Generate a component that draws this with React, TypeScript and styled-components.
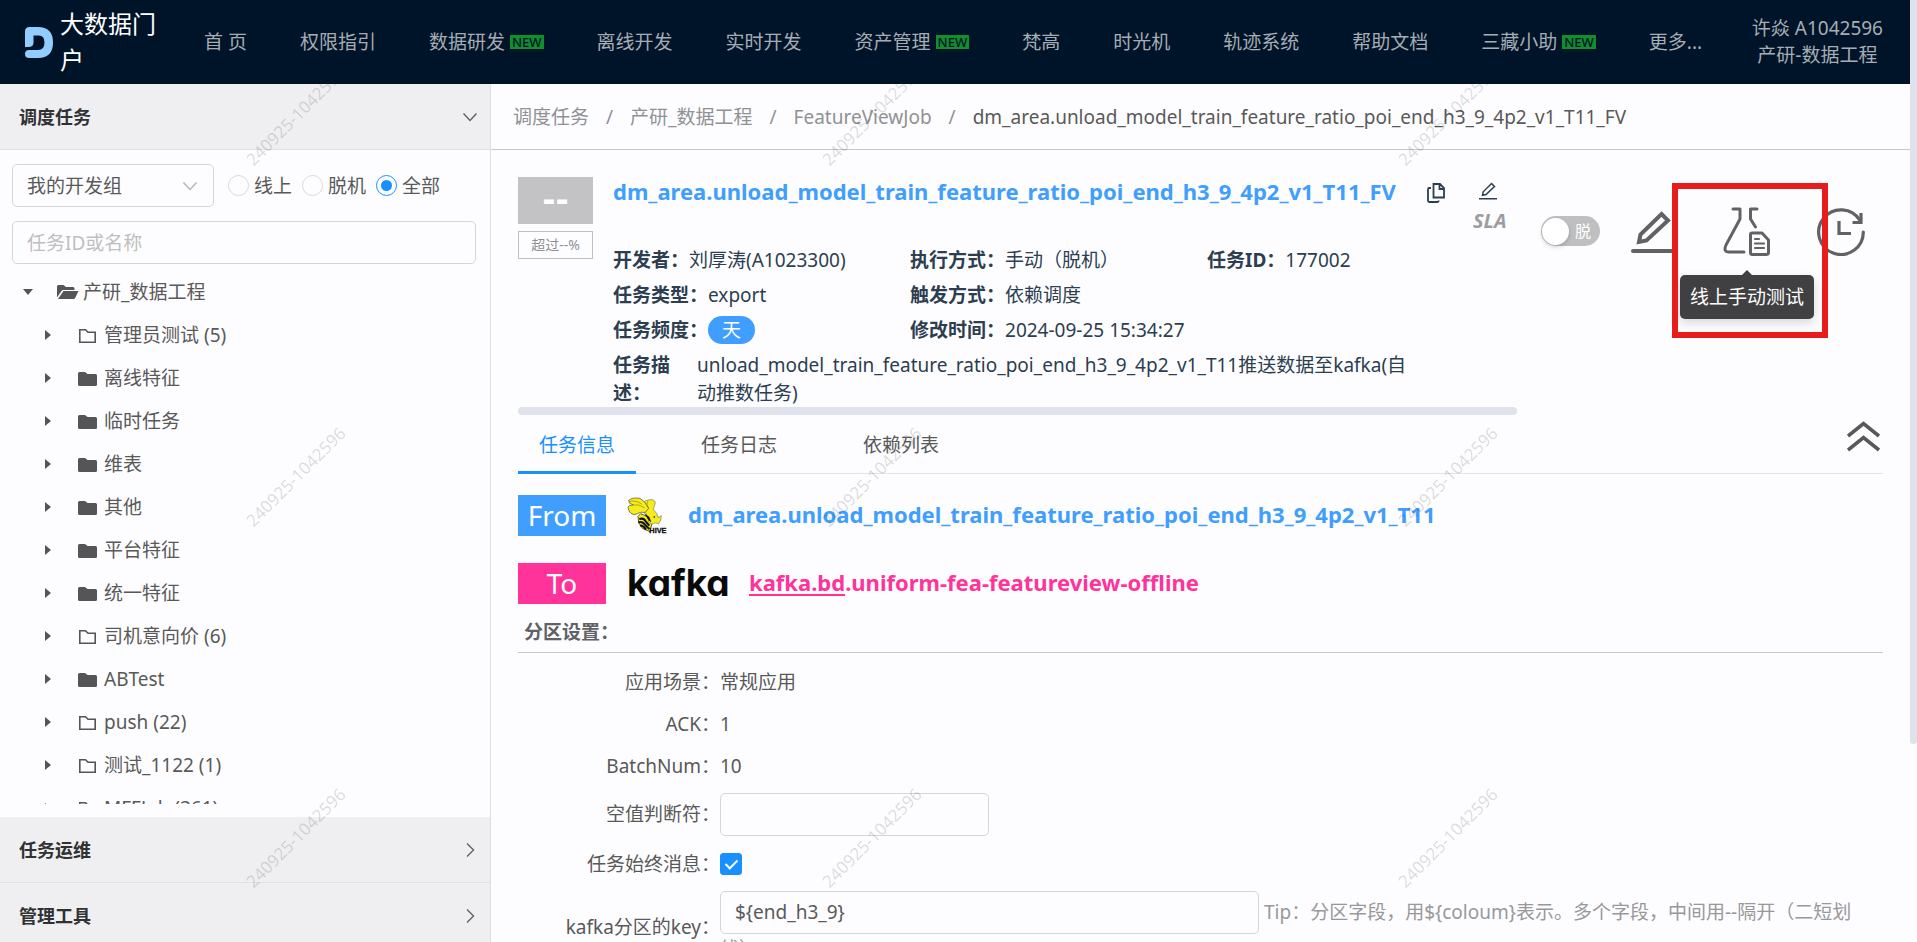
import React from 'react';
import styled, { createGlobalStyle, css } from 'styled-components';

const fontStack = '"Noto Sans", "Noto Sans CJK SC", sans-serif';

const GlobalStyle = createGlobalStyle`
  *, *::before, *::after { box-sizing: border-box; }
  body {
    margin: 0;
    background: #fdfdff;
    color: #595959;
    font-family: ${fontStack};
    font-size: 19px;
    line-height: 28px;
  }
  button, input, select { font: inherit; color: inherit; margin: 0; }
  button { border: 0; padding: 0; background: none; cursor: pointer; }
  a { color: inherit; text-decoration: none; }
  ul, dl, dd, h1, h2, p { margin: 0; padding: 0; list-style: none; }
  svg { display: block; flex: none; }
`;

/* ---------- shell ---------- */

const Page = styled.div`
  display: flex;
  height: 100vh;
  overflow: hidden;
`;

const Shell = styled.div`
  flex: 1;
  min-width: 0;
  display: flex;
  flex-direction: column;
`;

const ScrollRail = styled.div`
  width: 7px;
  flex: none;
`;

const ScrollThumb = styled.div`
  height: 79%;
  background: #dfe1ec;
  border-radius: 0 0 4px 4px;
`;

const Body = styled.div`
  position: relative;
  flex: 1;
  min-height: 0;
  display: flex;
  overflow: hidden;
`;

/* ---------- top bar ---------- */

const TopBar = styled.header`
  flex: none;
  height: 84px;
  display: flex;
  align-items: center;
  padding: 0 27px 0 25px;
  background: #001429;
  color: #a6adb4;
  line-height: 27px;
`;

const Brand = styled.a`
  display: flex;
  align-items: center;
  gap: 7px;
  width: 151px;
  margin-right: 28px;
  flex: none;
  color: #fff;
  font-size: 24px;
  line-height: 36px;
`;

const Menu = styled.nav`
  display: flex;
  align-items: center;
  gap: 53px;
  flex: 1;
  white-space: nowrap;
`;

const MenuLink = styled.a`
  display: flex;
  align-items: center;
  gap: 5px;
`;

const NewTag = styled.span`
  height: 14px;
  padding: 0 2px;
  background: #0f8f2d;
  color: #001429;
  font-size: 13px;
  line-height: 14px;
  font-weight: 500;
`;

const User = styled.div`
  text-align: center;
  white-space: nowrap;
`;

/* ---------- side bar ---------- */

const Sidebar = styled.aside`
  width: 491px;
  height: calc(100% + 7px);
  flex: none;
  display: flex;
  flex-direction: column;
  border-right: 1px solid #e0e0e4;
`;

const PanelHead = styled.button`
  flex: none;
  display: flex;
  align-items: center;
  justify-content: space-between;
  height: 66px;
  padding: 0 12px 0 19px;
  background: #efeff1;
  border-bottom: 1px solid #e0e0e3;
  color: #303133;
  font-size: 18px;
  font-weight: 700;
`;

const Filters = styled.form`
  flex: none;
  padding: 14px 14px 0 12px;
`;

const FilterRow = styled.div`
  display: flex;
  align-items: center;
  margin-bottom: 14px;
`;

const SelectBox = styled.div`
  display: grid;
  align-items: center;
  width: 202px;
  margin-right: 14px;

  & > * { grid-area: 1 / 1; }
  svg { justify-self: end; margin-right: 16px; pointer-events: none; }
`;

const fieldLook = css`
  height: 43px;
  border: 1px solid #d6d6d8;
  border-radius: 5px;
  background: transparent;
  padding: 0 14px;
  outline: none;
  &::placeholder { color: #bfbfbf; opacity: 1; }
`;

const Select = styled.select`
  ${fieldLook}
  appearance: none;
  width: 100%;
`;

const SearchInput = styled.input`
  ${fieldLook}
  display: block;
  width: 100%;
`;

const RadioLabel = styled.label`
  display: flex;
  align-items: center;
  gap: 5px;
  margin-right: 10px;
`;

const Radio = styled.input`
  appearance: none;
  display: grid;
  place-items: center;
  width: 21px;
  height: 21px;
  border: 1px solid #d9d9d9;
  border-radius: 50%;
  &:checked { border-color: #1890ff; }
  &:checked::after {
    content: '';
    width: 11px;
    height: 11px;
    border-radius: 50%;
    background: #1890ff;
  }
`;

const Tree = styled.ul`
  && { padding: 6px 0 0 23px; }
  flex: 1;
  min-height: 0;
  margin-bottom: 13px;
  overflow: hidden;
`;

const TreeRow = styled.li<{ $child?: boolean }>`
  display: flex;
  align-items: center;
  height: 43px;
  padding-left: ${(p) => (p.$child ? 21 : 0)}px;
`;

const CaretSlot = styled.span<{ $open?: boolean }>`
  display: flex;
  align-items: center;
  justify-content: center;
  width: 10px;
  margin-right: 24px;
`;

const FolderSlot = styled.span`
  width: 22px;
  margin-right: 4px;
`;

/* ---------- main ---------- */

const Main = styled.main`
  flex: 1;
  min-width: 0;
`;

const Crumbs = styled.nav`
  display: flex;
  align-items: center;
  gap: 17px;
  height: 66px;
  padding: 0 22px;
  border-bottom: 1px solid #c8c8ca;
  color: #909194;
  white-space: nowrap;
`;

const CurrentCrumb = styled.span`
  color: #595959;
`;

const Content = styled.div`
  padding: 27px 27px 0;
`;

const JobHead = styled.section`
  display: flex;
  color: #2c3e50;
`;

const JobScroll = styled.div`
  flex: 1;
  min-width: 0;
`;

const JobTop = styled.div`
  display: flex;
  height: 230px;
`;

const JobScrollbar = styled.div`
  height: 8px;
  border-radius: 4px;
  background: #dfe1ec;
`;

const ScoreColumn = styled.div`
  width: 75px;
  margin-right: 20px;
  flex: none;
`;

const Score = styled.div`
  height: 47px;
  margin-bottom: 7px;
  background: #c3c3c5;
  color: #fff;
  font-family: "DejaVu Sans", sans-serif;
  font-size: 32px;
  line-height: 47px;
  font-weight: 700;
  text-align: center;
`;

const ScoreNote = styled.div`
  height: 28px;
  border: 1px solid #c0c0c2;
  color: #909194;
  font-size: 14px;
  line-height: 26px;
  text-align: center;
`;

const JobInfo = styled.div`
  flex: 1;
  min-width: 0;
`;

const JobTitleRow = styled.div`
  display: flex;
  align-items: center;
  gap: 31px;
  height: 32px;
  margin-bottom: 33px;
`;

const ResourceName = styled.h1<{ $tone: 'blue' | 'pink' }>`
  font-size: 22px;
  line-height: 28px;
  font-weight: 700;
  white-space: nowrap;
  color: ${(p) => (p.$tone === 'blue' ? '#409eff' : '#ff3399')};
  && { padding-bottom: 4px; }
`;

const Facts = styled.dl`
  display: grid;
  grid-template-columns: 297px 297px auto;
  grid-auto-rows: 35px;
  align-items: center;
  justify-content: start;
`;

const Fact = styled.div`
  display: flex;
  white-space: nowrap;
`;

const FactName = styled.dt`
  font-weight: 700;
`;

const Pill = styled.span`
  display: block;
  height: 28px;
  padding: 0 14px;
  border-radius: 14px;
  background: #409eff;
  color: #fff;
  line-height: 28px;
`;

const Description = styled.dl`
  && { padding: 4px 44px 0 0; }
  display: grid;
  grid-template-columns: 84px 1fr;
  dt { padding-right: 20px; }
  overflow-wrap: anywhere;
`;

const SlaColumn = styled.div`
  flex: none;
  display: flex;
  flex-direction: column;
  gap: 7px;
  width: 48px;
  padding-top: 5px;
  padding-left: 4px;

  svg { margin-left: 6px; }
`;

const Sla = styled.span`
  color: #9d9d9f;
  font-size: 20px;
  line-height: 28px;
  font-weight: 700;
  font-style: italic;
`;

const Actions = styled.div`
  flex: none;
  display: flex;
  align-items: center;
  gap: 44px;
  height: 108px;
  padding: 0 18px 0 24px;
`;

const Switch = styled.button`
  display: flex;
  align-items: center;
  justify-content: space-between;
  width: 59px;
  height: 30px;
  padding: 0 9px 0 1px;
  margin-right: -13px;
  border-radius: 15px;
  background: #bfbfc1;
  color: #fff;
  font-size: 16px;
`;

const Knob = styled.span`
  width: 27px;
  height: 27px;
  border-radius: 50%;
  background: #fff;
  box-shadow: 0 2px 4px rgba(0, 35, 11, 0.2);
`;

const IconButton = styled.button`
  position: relative;
  color: #606266;
`;

const Highlight = styled.span`
  position: absolute;
  z-index: 2;
  left: -51px;
  top: -24px;
  width: 156px;
  height: 155px;
  border: 6px solid #e91c1c;
  pointer-events: none;
`;

const Tooltip = styled.span`
  position: absolute;
  z-index: 1;
  top: 68px;
  left: 50%;
  transform: translateX(-50%);
  padding: 8px 10px;
  border-radius: 5px;
  background: #404042;
  box-shadow: 0 4px 11px rgba(0, 0, 0, 0.15);
  color: #fff;
  white-space: nowrap;

  &::before {
    content: '';
    position: absolute;
    left: 50%;
    top: -5px;
    margin-left: -5px;
    border: 5px solid transparent;
    border-top: 0;
    border-bottom-color: #404042;
  }
`;

const TabBar = styled.div`
  display: flex;
  gap: 44px;
  height: 59px;
  margin-bottom: 21px;
  border-bottom: 1px solid #e4e4e6;
`;

const Tab = styled.button<{ $active?: boolean }>`
  height: 59px;
  padding: 3px 21px 0;
  color: ${(p) => (p.$active ? '#1890ff' : '#595959')};
  border-bottom: 3px solid ${(p) => (p.$active ? '#1890ff' : 'transparent')};
`;

const CollapseButton = styled.button`
  margin-left: auto;
  margin-right: 3px;
  align-self: flex-start;
  padding-top: 6px;
`;

const Endpoint = styled.div`
  display: flex;
  align-items: center;
  gap: 21px;
  height: 41px;
  margin-bottom: 27px;
`;

const EndpointTag = styled.span<{ $tone: 'blue' | 'pink' }>`
  width: 88px;
  background: ${(p) => (p.$tone === 'blue' ? '#409eff' : '#ff3399')};
  color: #fff;
  font-size: 28px;
  line-height: 41px;
  text-align: center;
`;

const KafkaMark = styled.span`
  width: 101px;
  padding-bottom: 2px;
  color: #0a0a0a;
  font-family: Inter, sans-serif;
  font-feature-settings: 'cv11';
  font-size: 37px;
  line-height: 39px;
  font-weight: 700;
`;

const Underlined = styled.a`
  text-decoration: underline;
  text-decoration-thickness: 2px;
  text-underline-offset: 3px;
`;

const SectionTitle = styled.h2`
  margin: -27px 0 8px;
  && { padding: 8px 6px 0; }
  border-bottom: 1px solid #c8c8ca;
  color: #606266;
  font-size: 19px;
  line-height: 40px;
  font-weight: 700;
`;

const FieldRow = styled.div<{ $size: 'text' | 'input' | 'check' | 'long' }>`
  display: grid;
  grid-template-columns: 202px 1fr;
  align-items: center;
  min-height: ${(p) => ({ text: 42, input: 54, check: 46, long: 80 }[p.$size])}px;
`;

const FieldName = styled.label`
  text-align: right;
  white-space: nowrap;
`;

const FieldValue = styled.div`
  padding-right: 24px;
`;

const TextInput = styled.input<{ $wide?: boolean }>`
  ${fieldLook}
  width: ${(p) => (p.$wide ? 539 : 269)}px;
  max-width: 100%;
  vertical-align: middle;
`;

const Tip = styled.span`
  margin-left: 5px;
  color: #98989b;
  vertical-align: middle;
`;

const Checkbox = styled.input`
  appearance: none;
  display: grid;
  place-items: center;
  width: 22px;
  height: 22px;
  border-radius: 3px;
  border: 1px solid #d9d9d9;
  &:checked { background: #1890ff; border-color: #1890ff; }
  &:checked::after {
    content: '';
    width: 7px;
    height: 12px;
    margin-top: -3px;
    border: solid #fff;
    border-width: 0 2px 2px 0;
    transform: rotate(45deg);
  }
`;

/* ---------- watermark ---------- */

const WatermarkLayer = styled.div`
  position: absolute;
  inset: -149px auto auto 8px;
  width: 1728px;
  display: grid;
  grid-template-columns: repeat(3, 576px);
  grid-auto-rows: 361px;
  place-items: center;
  pointer-events: none;
`;

const Mark = styled.span`
  transform: rotate(-45deg);
  color: rgba(0, 0, 0, 0.15);
  font-size: 17px;
`;

/* ---------- icons ---------- */

const Chevron = ({ dir, color = '#606266' }: { dir: 'down' | 'right'; color?: string }) => (
  <svg width="16" height="16" viewBox="0 0 16 16" fill="none" stroke={color} strokeWidth="1.4">
    <path d={dir === 'down' ? 'M1.5 4.5 8 11.5l6.5-7' : 'M5 1.5 11.5 8 5 14.5'} />
  </svg>
);

const Caret = ({ open }: { open?: boolean }) => (
  <svg width="10" height="10" viewBox="0 0 10 10" fill="#555557">
    <path d={open ? 'M0 2h10L5 8z' : 'M1 0v10l6-5z'} />
  </svg>
);

const Folder = ({ kind }: { kind: 'open' | 'solid' | 'line' }) => (
  <svg width="22" height="20" viewBox="0 0 22 20">
    {kind === 'open' && (
      <path fill="#555557" d="M0 4.5Q0 3 1.500 3H6.500L9 5h7q1.500 0 1.500 1.500V8H6Q5 8 4.500 9L0 15.500zM6.500 9H21.500L18 16.200q-.4.800-1.300.8H1z" />
    )}
    {kind === 'solid' && (
      <path fill="#555557" d="M0 5.500Q0 4 1.500 4H7L9.500 6H17.500Q19 6 19 7.500V16.500Q19 18 17.500 18H1.500Q0 18 0 16.500z" />
    )}
    {kind === 'line' && (
      <path fill="none" stroke="#555557" strokeWidth="1.600" d="M1.800 4.800H7.500L10 7.300H17.200V17.200H1.800z" />
    )}
  </svg>
);

const BrandMark = () => (
  <svg width="28" height="31" viewBox="0 0 28 31" fill="#93cdff">
    <path d="M0 4.500Q0 0 4.500 0H13Q28 0 28 15.500T13 31H4Q0 31 0 27Q0 23 4 23H13Q19.500 23 19.500 15.500T13 8.500H8.500V15.500Q8.500 19.500 4.200 20H0z" />
  </svg>
);

const CopyIcon = () => (
  <svg width="18" height="20" viewBox="0 0 18 20" fill="none" stroke="#2c3e50" strokeWidth="1.800">
    <path d="M6.500 1H13l4 4v9.500H6.500zM12.500 1.500V6H17M4 5H2.200Q1 5 1 6.200V17.800Q1 19 2.200 19H10.500Q11.700 19 11.700 17.500" />
  </svg>
);

const SmallPen = () => (
  <svg width="18" height="18" viewBox="0 0 18 18" fill="none" stroke="#2c3e50" strokeWidth="1.500">
    <path d="M0 16.800H18M12.500 1.500 15.500 4.500 7 12.500 3.500 13.300 4.200 9.800z" />
  </svg>
);

const PenIcon = () => (
  <svg width="48" height="49" viewBox="0 0 48 49" fill="none" stroke="currentColor" strokeWidth="4">
    <path d="M2 44H45" strokeLinecap="round" />
    <path d="M30.500 7 37 13.500 15.500 33.500 8 35 9.500 27.500z" />
  </svg>
);

const FlaskIcon = () => (
  <svg width="48" height="49" viewBox="0 0 48 49" fill="none" stroke="currentColor" strokeWidth="3" strokeLinecap="round" strokeLinejoin="round">
    <path d="M10 2H17V12L3 38Q0 45 6 45H21M34 2H27.500V12L32.500 20" />
    <path d="M29 26H39L45.500 33V45Q45.500 47.500 43.500 47.500H29Q27.500 47.500 27.500 45.500V27.500Q27.500 26 29 26z" />
    <path d="M32 32H36M32 36.500H41M32 41H41" strokeWidth="2.200" />
  </svg>
);

const HistoryIcon = () => (
  <svg width="50" height="49" viewBox="0 0 50 49" fill="none" stroke="currentColor" strokeWidth="3.200">
    <path d="M48.300 25A22.300 22.300 0 1 1 45 13.500" strokeLinecap="round" />
    <path d="M46 6V15.500H37.500" />
    <path d="M24 14V26.500H36" />
  </svg>
);

const DoubleUp = () => (
  <svg width="33" height="31" viewBox="0 0 33 31" fill="none" stroke="#58585a" strokeWidth="3.600">
    <path d="M1 15 16.500 2.500 32 15M1 29 16.500 16.500 32 29" />
  </svg>
);

const HiveLogo = () => (
  <svg width="40" height="37" viewBox="29 26 120 111">
    <path d="M62 84Q60 105 75 120L98 130 104 104 88 84 70 76z" fill="#f4ec1c" stroke="#111" strokeWidth="2" />
    <path d="M66 92Q80 88 84 98L96 112M63 102Q76 98 84 110L96 122M68 112Q78 110 86 124" fill="none" stroke="#111" strokeWidth="6" />
    <path d="M76 58Q74 38 92 35Q112 30 114 44Q110 56 108 64Q121 74 122 88L132 82Q132 98 124 106Q112 100 104 108Q92 104 92 92Q86 72 76 58z" fill="#f4ec1c" stroke="#555" strokeWidth="1.500" />
    <path d="M32 56Q34 50 48 50 32 46 34 36Q46 26 68 30Q84 38 94 60L84 72Q68 70 60 76Q50 84 40 74Q32 66 32 56z" fill="#f4ec1c" stroke="#444" strokeWidth="2" />
    <path d="M48 50Q62 46 82 58M92 38Q84 46 94 60M36 40Q56 34 74 48" fill="none" stroke="#8a8614" strokeWidth="2" />
    <path d="M80 74 96 86 102 102 94 96z" fill="#111" />
    <circle cx="111" cy="86" r="2.500" fill="#111" />
    <text x="96" y="134" fontFamily="Liberation Sans, sans-serif" fontWeight="700" fontSize="22" fill="#111" stroke="#111" strokeWidth="1">HIVE</text>
  </svg>
);

/* ---------- data ---------- */

const menu: { label: string; isNew?: boolean }[] = [
  { label: '首 页' },
  { label: '权限指引' },
  { label: '数据研发', isNew: true },
  { label: '离线开发' },
  { label: '实时开发' },
  { label: '资产管理', isNew: true },
  { label: '梵高' },
  { label: '时光机' },
  { label: '轨迹系统' },
  { label: '帮助文档' },
  { label: '三藏小助', isNew: true },
  { label: '更多...' },
];

const folders: { name: string; solid?: boolean }[] = [
  { name: '管理员测试 (5)' },
  { name: '离线特征', solid: true },
  { name: '临时任务', solid: true },
  { name: '维表', solid: true },
  { name: '其他', solid: true },
  { name: '平台特征', solid: true },
  { name: '统一特征', solid: true },
  { name: '司机意向价 (6)' },
  { name: 'ABTest', solid: true },
  { name: 'push (22)' },
  { name: '测试_1122 (1)' },
  { name: 'MFFJob (361)' },
];

const facts: { name: string; value: React.ReactNode }[] = [
  { name: '开发者：', value: '刘厚涛(A1023300)' },
  { name: '执行方式：', value: '手动（脱机）' },
  { name: '任务ID：', value: '177002' },
  { name: '任务类型：', value: 'export' },
  { name: '触发方式：', value: '依赖调度' },
  { name: '', value: '' },
  { name: '任务频度：', value: <Pill>天</Pill> },
  { name: '修改时间：', value: '2024-09-25 15:34:27' },
];

const tabs = ['任务信息', '任务日志', '依赖列表'];

const tableName = 'dm_area.unload_model_train_feature_ratio_poi_end_h3_9_4p2_v1_T11';
const jobName = `${tableName}_FV`;

/* ---------- page ---------- */

export default function App() {
  return (
    <>
      <GlobalStyle />
      <Page>
        <Shell>
          <TopBar>
            <Brand href="#">
              <BrandMark />
              大数据门户
            </Brand>
            <Menu>
              {menu.map((item) => (
                <MenuLink key={item.label} href="#">
                  {item.label}
                  {item.isNew && <NewTag>NEW</NewTag>}
                </MenuLink>
              ))}
            </Menu>
            <User>
              许焱 A1042596
              <br />
              产研-数据工程
            </User>
          </TopBar>

          <Body>
            <Sidebar>
              <PanelHead type="button">
                调度任务
                <Chevron dir="down" />
              </PanelHead>
              <Filters>
                <FilterRow>
                  <SelectBox>
                    <Select aria-label="开发组" defaultValue="mine">
                      <option value="mine">我的开发组</option>
                    </Select>
                    <Chevron dir="down" color="#b4b4b6" />
                  </SelectBox>
                  {['线上', '脱机', '全部'].map((label) => (
                    <RadioLabel key={label}>
                      <Radio type="radio" name="state" defaultChecked={label === '全部'} />
                      {label}
                    </RadioLabel>
                  ))}
                </FilterRow>
                <SearchInput type="text" aria-label="任务ID或名称" placeholder="任务ID或名称" />
              </Filters>
              <Tree>
                <TreeRow>
                  <CaretSlot>
                    <Caret open />
                  </CaretSlot>
                  <FolderSlot>
                    <Folder kind="open" />
                  </FolderSlot>
                  产研_数据工程
                </TreeRow>
                {folders.map((f) => (
                  <TreeRow key={f.name} $child>
                    <CaretSlot>
                      <Caret />
                    </CaretSlot>
                    <FolderSlot>
                      <Folder kind={f.solid ? 'solid' : 'line'} />
                    </FolderSlot>
                    {f.name}
                  </TreeRow>
                ))}
              </Tree>
              <PanelHead type="button">
                任务运维
                <Chevron dir="right" />
              </PanelHead>
              <PanelHead type="button">
                管理工具
                <Chevron dir="right" />
              </PanelHead>
            </Sidebar>

            <Main>
              <Crumbs>
                <a href="#">调度任务</a>
                <span>/</span>
                <a href="#">产研_数据工程</a>
                <span>/</span>
                <a href="#">FeatureViewJob</a>
                <span>/</span>
                <CurrentCrumb>{jobName}</CurrentCrumb>
              </Crumbs>

              <Content>
                <JobHead>
                  <JobScroll>
                    <JobTop>
                      <ScoreColumn>
                        <Score>--</Score>
                        <ScoreNote>超过--%</ScoreNote>
                      </ScoreColumn>
                      <JobInfo>
                        <JobTitleRow>
                          <ResourceName $tone="blue">{jobName}</ResourceName>
                          <button type="button" aria-label="复制">
                            <CopyIcon />
                          </button>
                        </JobTitleRow>
                        <Facts>
                          {facts.map((f, i) => (
                            <Fact key={i}>
                              <FactName>{f.name}</FactName>
                              <dd>{f.value}</dd>
                            </Fact>
                          ))}
                        </Facts>
                        <Description>
                          <FactName>任务描述：</FactName>
                          <dd>{tableName.replace('dm_area.', '')}推送数据至kafka(自动推数任务)</dd>
                        </Description>
                      </JobInfo>
                      <SlaColumn>
                        <button type="button" aria-label="编辑">
                          <SmallPen />
                        </button>
                        <Sla>SLA</Sla>
                      </SlaColumn>
                    </JobTop>
                    <JobScrollbar />
                  </JobScroll>
                  <Actions>
                    <Switch type="button" role="switch" aria-checked="false">
                      <Knob />脱
                    </Switch>
                    <IconButton type="button" aria-label="编辑任务">
                      <PenIcon />
                    </IconButton>
                    <IconButton type="button">
                      <FlaskIcon />
                      <Tooltip role="tooltip">线上手动测试</Tooltip>
                      <Highlight />
                    </IconButton>
                    <IconButton type="button" aria-label="历史">
                      <HistoryIcon />
                    </IconButton>
                  </Actions>
                </JobHead>

                <TabBar>
                  {tabs.map((t, i) => (
                    <Tab key={t} type="button" $active={i === 0}>
                      {t}
                    </Tab>
                  ))}
                  <CollapseButton type="button" aria-label="收起">
                    <DoubleUp />
                  </CollapseButton>
                </TabBar>

                <Endpoint>
                  <EndpointTag $tone="blue">From</EndpointTag>
                  <HiveLogo />
                  <ResourceName as="h2" $tone="blue">{tableName}</ResourceName>
                </Endpoint>
                <Endpoint>
                  <EndpointTag $tone="pink">To</EndpointTag>
                  <KafkaMark>kafka</KafkaMark>
                  <ResourceName as="h2" $tone="pink">
                    <Underlined href="#">kafka.bd</Underlined>.uniform-fea-featureview-offline
                  </ResourceName>
                </Endpoint>

                <SectionTitle>分区设置：</SectionTitle>
                <FieldRow $size="text">
                  <FieldName as="span">应用场景：</FieldName>
                  <FieldValue>常规应用</FieldValue>
                </FieldRow>
                <FieldRow $size="text">
                  <FieldName as="span">ACK：</FieldName>
                  <FieldValue>1</FieldValue>
                </FieldRow>
                <FieldRow $size="text">
                  <FieldName as="span">BatchNum：</FieldName>
                  <FieldValue>10</FieldValue>
                </FieldRow>
                <FieldRow $size="input">
                  <FieldName htmlFor="null-mark">空值判断符：</FieldName>
                  <FieldValue>
                    <TextInput id="null-mark" type="text" />
                  </FieldValue>
                </FieldRow>
                <FieldRow $size="check">
                  <FieldName htmlFor="edge-message">任务始终消息：</FieldName>
                  <FieldValue>
                    <Checkbox id="edge-message" type="checkbox" defaultChecked />
                  </FieldValue>
                </FieldRow>
                <FieldRow $size="long">
                  <FieldName htmlFor="partition-key">kafka分区的key：</FieldName>
                  <FieldValue>
                    <TextInput id="partition-key" type="text" $wide defaultValue="${end_h3_9}" />
                    <Tip>Tip：分区字段，用{'${coloum}'}表示。多个字段，中间用--隔开（二短划线）</Tip>
                  </FieldValue>
                </FieldRow>
              </Content>
            </Main>

            <WatermarkLayer aria-hidden="true">
              {Array.from({ length: 9 }, (_, i) => (
                <Mark key={i}>240925-1042596</Mark>
              ))}
            </WatermarkLayer>
          </Body>
        </Shell>
        <ScrollRail>
          <ScrollThumb />
        </ScrollRail>
      </Page>
    </>
  );
}
